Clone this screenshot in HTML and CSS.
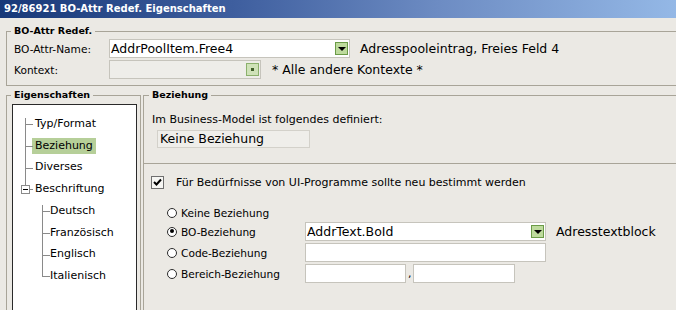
FILE: index.html
```html
<!DOCTYPE html>
<html lang="de">
<head>
<meta charset="utf-8">
<title>BO-Attr Redef. Eigenschaften</title>
<link rel="stylesheet" href="styles.css">
</head>
<body>
<div class="titlebar">92/86921 BO-Attr Redef. Eigenschaften</div>
<div class="content">
  <fieldset class="group g-attr">
    <legend>BO-Attr Redef.</legend>
    <div class="row">
      <span class="label">BO-Attr-Name:</span>
      <div class="combo w-name"><span class="val">AddrPoolItem.Free4</span><span class="dd"><span class="arrow"></span></span></div>
      <span class="info">Adresspooleintrag, Freies Feld 4</span>
    </div>
    <div class="row">
      <span class="label">Kontext:</span>
      <div class="combo disabled w-ctx"><span class="val"></span><span class="dd"><span class="dot"></span></span></div>
      <span class="info info-ctx">* Alle andere Kontexte *</span>
    </div>
  </fieldset>

  <div class="lower">
    <fieldset class="group g-props">
      <legend>Eigenschaften</legend>
      <ul class="tree">
        <li><div class="item first"><span class="lbl">Typ/Format</span></div></li>
        <li><div class="item"><span class="lbl sel">Beziehung</span></div></li>
        <li><div class="item"><span class="lbl">Diverses</span></div></li>
        <li><div class="item last exp"><span class="box"></span><span class="lbl">Beschriftung</span></div>
          <ul class="sub">
            <li><div class="item first"><span class="lbl">Deutsch</span></div></li>
            <li><div class="item"><span class="lbl">Französisch</span></div></li>
            <li><div class="item"><span class="lbl">Englisch</span></div></li>
            <li><div class="item last"><span class="lbl">Italienisch</span></div></li>
          </ul>
        </li>
      </ul>
    </fieldset>

    <fieldset class="group g-rel">
      <legend>Beziehung</legend>
      <div class="desc">Im Business-Model ist folgendes definiert:</div>
      <div class="readonly">Keine Beziehung</div>
      <div class="sep"></div>
      <div class="checkrow">
        <span class="checkbox"><svg width="11" height="11" viewBox="0 0 11 11"><path d="M2 5 L4.5 7.5 L9 2.5" fill="none" stroke="#000" stroke-width="2"/></svg></span>
        <span class="checktext">Für Bedürfnisse von UI-Programme sollte neu bestimmt werden</span>
      </div>
      <div class="rrow r-first">
        <span class="radio"></span><span class="rlabel">Keine Beziehung</span>
      </div>
      <div class="rrow">
        <span class="radio on"></span><span class="rlabel">BO-Beziehung</span>
        <div class="combo w-ctl"><span class="val">AddrText.BoId</span><span class="dd"><span class="arrow"></span></span></div>
        <span class="info info-rel">Adresstextblock</span>
      </div>
      <div class="rrow">
        <span class="radio"></span><span class="rlabel">Code-Beziehung</span>
        <div class="input w-ctl"></div>
      </div>
      <div class="rrow">
        <span class="radio"></span><span class="rlabel">Bereich-Beziehung</span>
        <div class="input w-from"></div><span class="comma">,</span><div class="input w-to"></div>
      </div>
    </fieldset>
  </div>
</div>
</body>
</html>
```

FILE: styles.css
```css
* { box-sizing: border-box; }
html, body { margin: 0; padding: 0; }
body {
  width: 676px;
  height: 310px;
  overflow: hidden;
  background: #ebe9e4;
  font-family: "DejaVu Sans", sans-serif;
  font-size: 11px;
  color: #000;
}
.titlebar {
  height: 18px;
  line-height: 18px;
  padding-left: 4px;
  color: #fff;
  font-weight: bold;
  font-size: 10px;
  white-space: nowrap;
  background: linear-gradient(to right, #173878 0%, #3f5f9f 35%, #6d8cc3 65%, #94b8e6 100%);
}
.content {
  width: 700px;
  padding: 7px 0 0 6px;
}
.group {
  border: 1px solid #a8a498;
  margin: 0;
  min-width: 0;
}
.group legend {
  font-weight: bold;
  font-size: 9.5px;
  line-height: 12px;
  padding: 0 3px;
}
.g-attr {
  padding: 2px 0 6px 7px;
}
.g-attr legend { margin-left: -3px; }

.row {
  display: flex;
  align-items: center;
  height: 19px;
}
.row + .row { margin-top: 2px; }
.label { width: 95px; font-size: 10.6px; }

.combo, .input {
  height: 19px;
  border: 1px solid #c6c4bc;
  background: #fff;
  flex: none;
}
.combo {
  display: flex;
  align-items: center;
  padding-left: 1px;
  font-size: 12.5px;
}
.combo .val { flex: 1; white-space: nowrap; overflow: hidden; }
.combo.disabled { background: #eeede9; }
.dd {
  width: 13px;
  height: 13px;
  margin-right: 1px;
  border: 1px solid #6b9b47;
  background: #bedb9d;
  display: flex;
  align-items: center;
  justify-content: center;
  flex: none;
}
.disabled .dd { background: #cfe2b8; border-color: #8bb06c; }
.arrow {
  width: 0;
  height: 0;
  border-left: 4px solid transparent;
  border-right: 4px solid transparent;
  border-top: 4px solid #000;
  margin-top: 1px;
}
.dot { width: 3px; height: 3px; background: #3f5e2a; }
.w-name { width: 241px; }
.w-ctx { width: 152px; }
.info { margin-left: 10px; font-size: 12.5px; white-space: nowrap; }
.info-ctx { margin-left: 11px; }

.lower {
  display: flex;
  margin-top: 3px;
  height: 240px;
}
.g-props {
  width: 135px;
  padding: 3px 3px 0 5px;
  flex: none;
}
.g-props legend { margin-left: -1px; }
.g-rel {
  flex: 1;
  margin-left: 2px;
  padding: 0 0 0 8px;
}
.g-rel legend { margin-left: -3px; }

/* tree */
.tree {
  list-style: none;
  margin: 0;
  padding: 8px 0 0 0;
  width: 125px;
  height: 240px;
  background: #fff;
  border: 1px solid #2a2a2a;
}
.tree ul { list-style: none; margin: 0; padding: 0; }
.item {
  position: relative;
  height: 21.75px;
  display: flex;
  align-items: center;
  padding-left: 19px;
}
.sub .item { padding-left: 34px; }
.item::before {
  content: "";
  position: absolute;
  left: 12px;
  top: 11px;
  width: 8px;
  height: 1px;
  background: #8a8a8a;
}
.item::after {
  content: "";
  position: absolute;
  left: 12px;
  top: 0;
  bottom: 0;
  width: 1px;
  background: #8a8a8a;
}
.item.first::after { top: 5px; }
.item.last::after { bottom: auto; height: 11px; }
.sub .item::before { left: 29px; }
.sub .item::after { left: 29px; }
.item.exp::after { height: 7px; }
.item.exp::before { left: 16px; width: 4px; }
.box {
  position: absolute;
  left: 8px;
  top: 7px;
  width: 9px;
  height: 9px;
  border: 1px solid #8a8a8a;
  background: #fff;
  z-index: 1;
}
.box::after {
  content: "";
  position: absolute;
  left: 1px;
  top: 3px;
  width: 5px;
  height: 1px;
  background: #000;
}
.lbl {
  display: inline-block;
  line-height: 16px;
  padding: 0 3px;
  white-space: nowrap;
}
.lbl.sel { background: #b6cf99; }

/* Beziehung panel */
.desc {
  margin-top: 12px;
  line-height: 13px;
  white-space: nowrap;
}
.readonly {
  margin: 4px 0 0 5px;
  width: 153px;
  height: 18px;
  line-height: 16px;
  padding-left: 2px;
  border: 1px solid #d3d1ca;
  background: #efeeea;
  font-size: 12.5px;
}
.sep {
  margin: 15px 0 0 -9px;
  border-top: 1px solid #a8a498;
}
.checkrow {
  display: flex;
  align-items: center;
  height: 13px;
  margin-top: 12px;
}
.checkbox {
  width: 13px;
  height: 13px;
  margin-left: -1px;
  border: 1px solid #6f6f6f;
  background: #f6f6f3;
  display: flex;
  align-items: center;
  justify-content: center;
  flex: none;
}
.checktext { margin-left: 12px; white-space: nowrap; }

.rrow {
  display: flex;
  align-items: center;
  height: 19px;
  margin-top: 2px;
  padding-left: 15px;
}
.rrow.r-first { margin-top: 15px; height: 18px; }
.rrow.r-first + .rrow { margin-top: 0; }
.radio {
  width: 10px;
  height: 10px;
  border: 1.5px solid #2b2b2b;
  border-radius: 50%;
  background: #fff;
  flex: none;
  position: relative;
}
.radio.on::after {
  content: "";
  position: absolute;
  left: 1.5px;
  top: 1.5px;
  width: 4px;
  height: 4px;
  border-radius: 50%;
  background: #000;
}
.rlabel {
  width: 124px;
  margin-left: 4px;
  font-size: 10.6px;
  white-space: nowrap;
}
.w-ctl { width: 241px; }
.w-from { width: 101px; }
.w-to { width: 102px; }
.comma { width: 7px; padding-left: 2px; line-height: 19px; }
.info-rel { margin-left: 10px; }
```
